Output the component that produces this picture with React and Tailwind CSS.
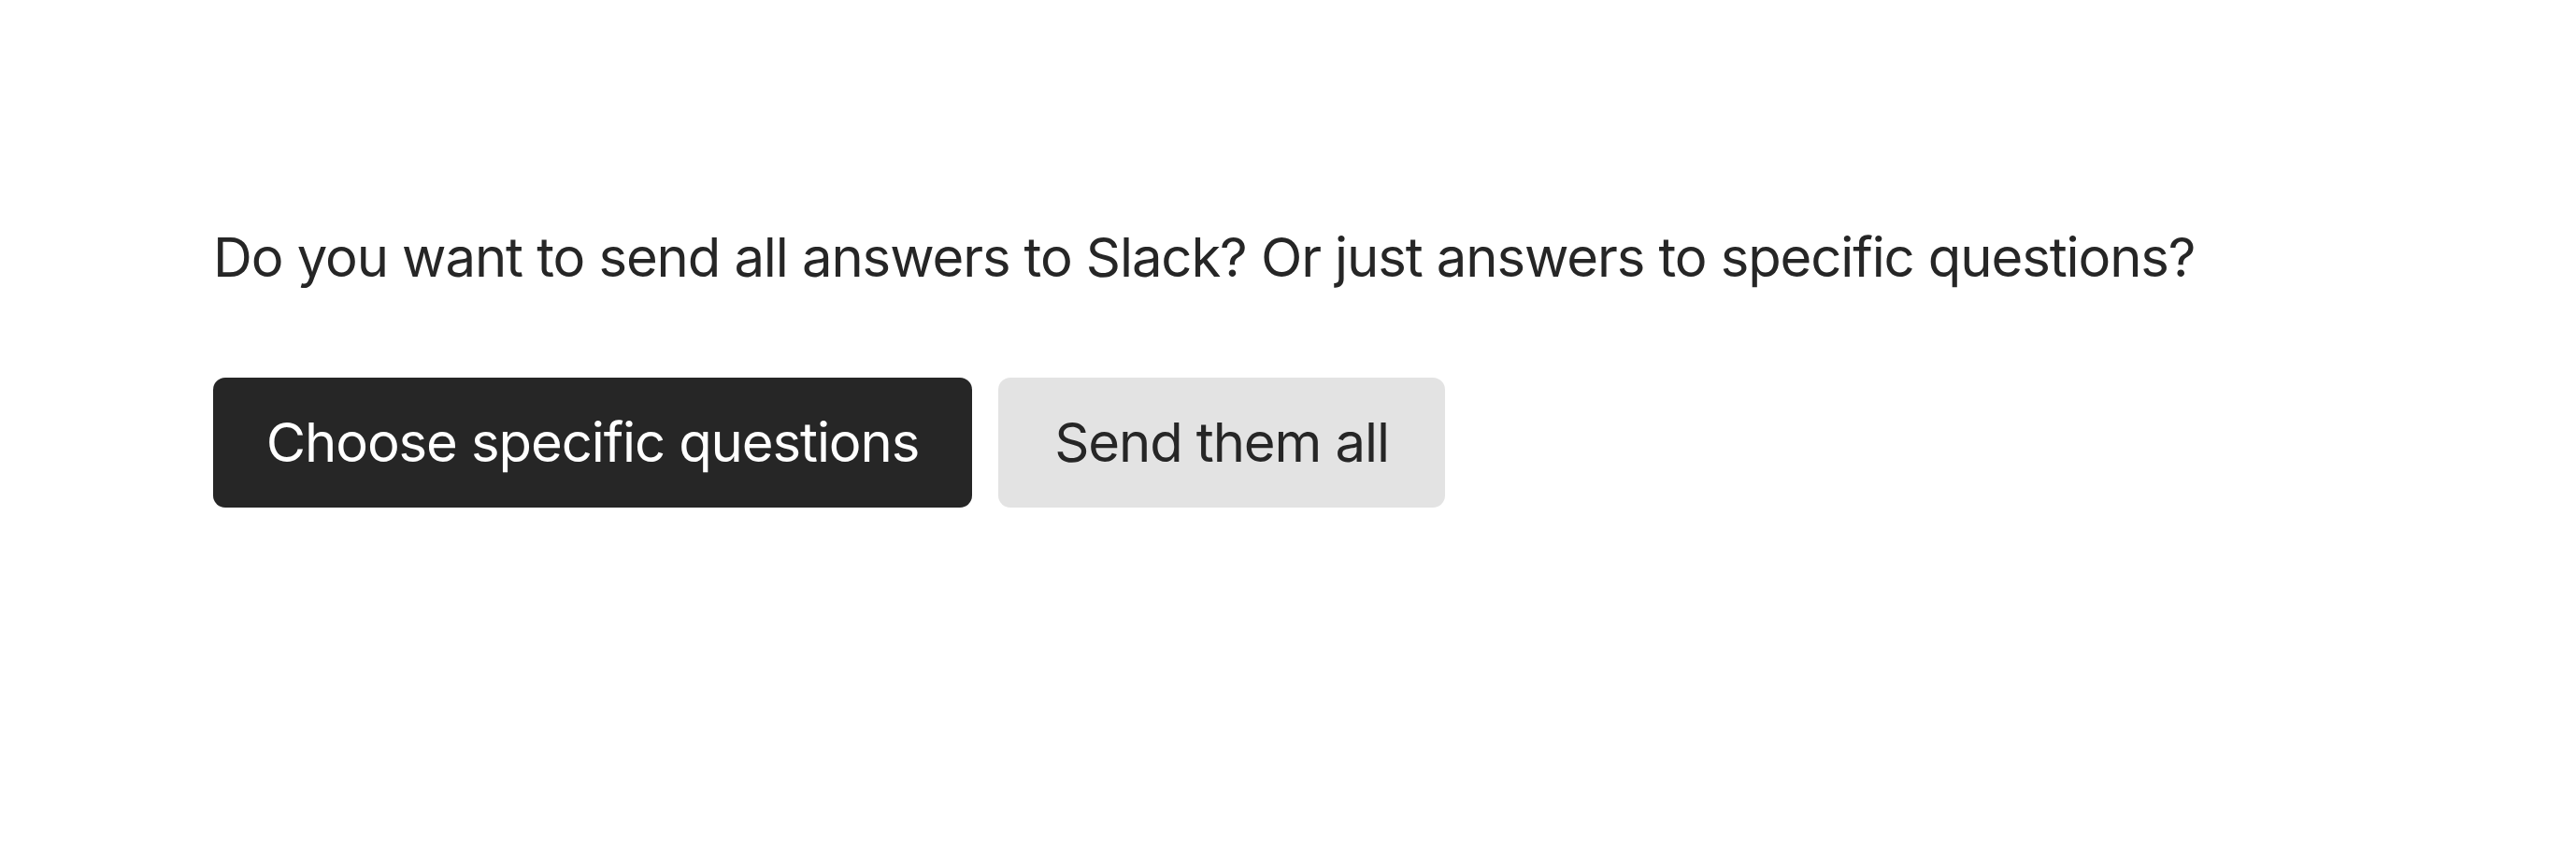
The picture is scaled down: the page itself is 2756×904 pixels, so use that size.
import React from 'react';

const App = () => {
  return (
    <div
      className="min-h-screen bg-white pl-[228px] pt-[232px] tracking-[-1.1px]"
      style={{ fontFamily: 'Inter, "Noto Sans", sans-serif' }}
    >
      <p className="text-[58px] leading-[87px] text-[#262626]">
        Do you want to send all answers to Slack? Or just answers to specific questions?
      </p>

      <div className="mt-[85px] flex gap-[28px]">
        <button className="flex h-[139px] w-[812px] items-center justify-center rounded-[13px] bg-[#262626] text-[58px] text-white">
          Choose specific questions
        </button>
        <button className="flex h-[139px] w-[478px] items-center justify-center rounded-[13px] bg-[#e3e3e3] text-[58px] text-[#262626]">
          Send them all
        </button>
      </div>
    </div>
  );
};

export default App;
